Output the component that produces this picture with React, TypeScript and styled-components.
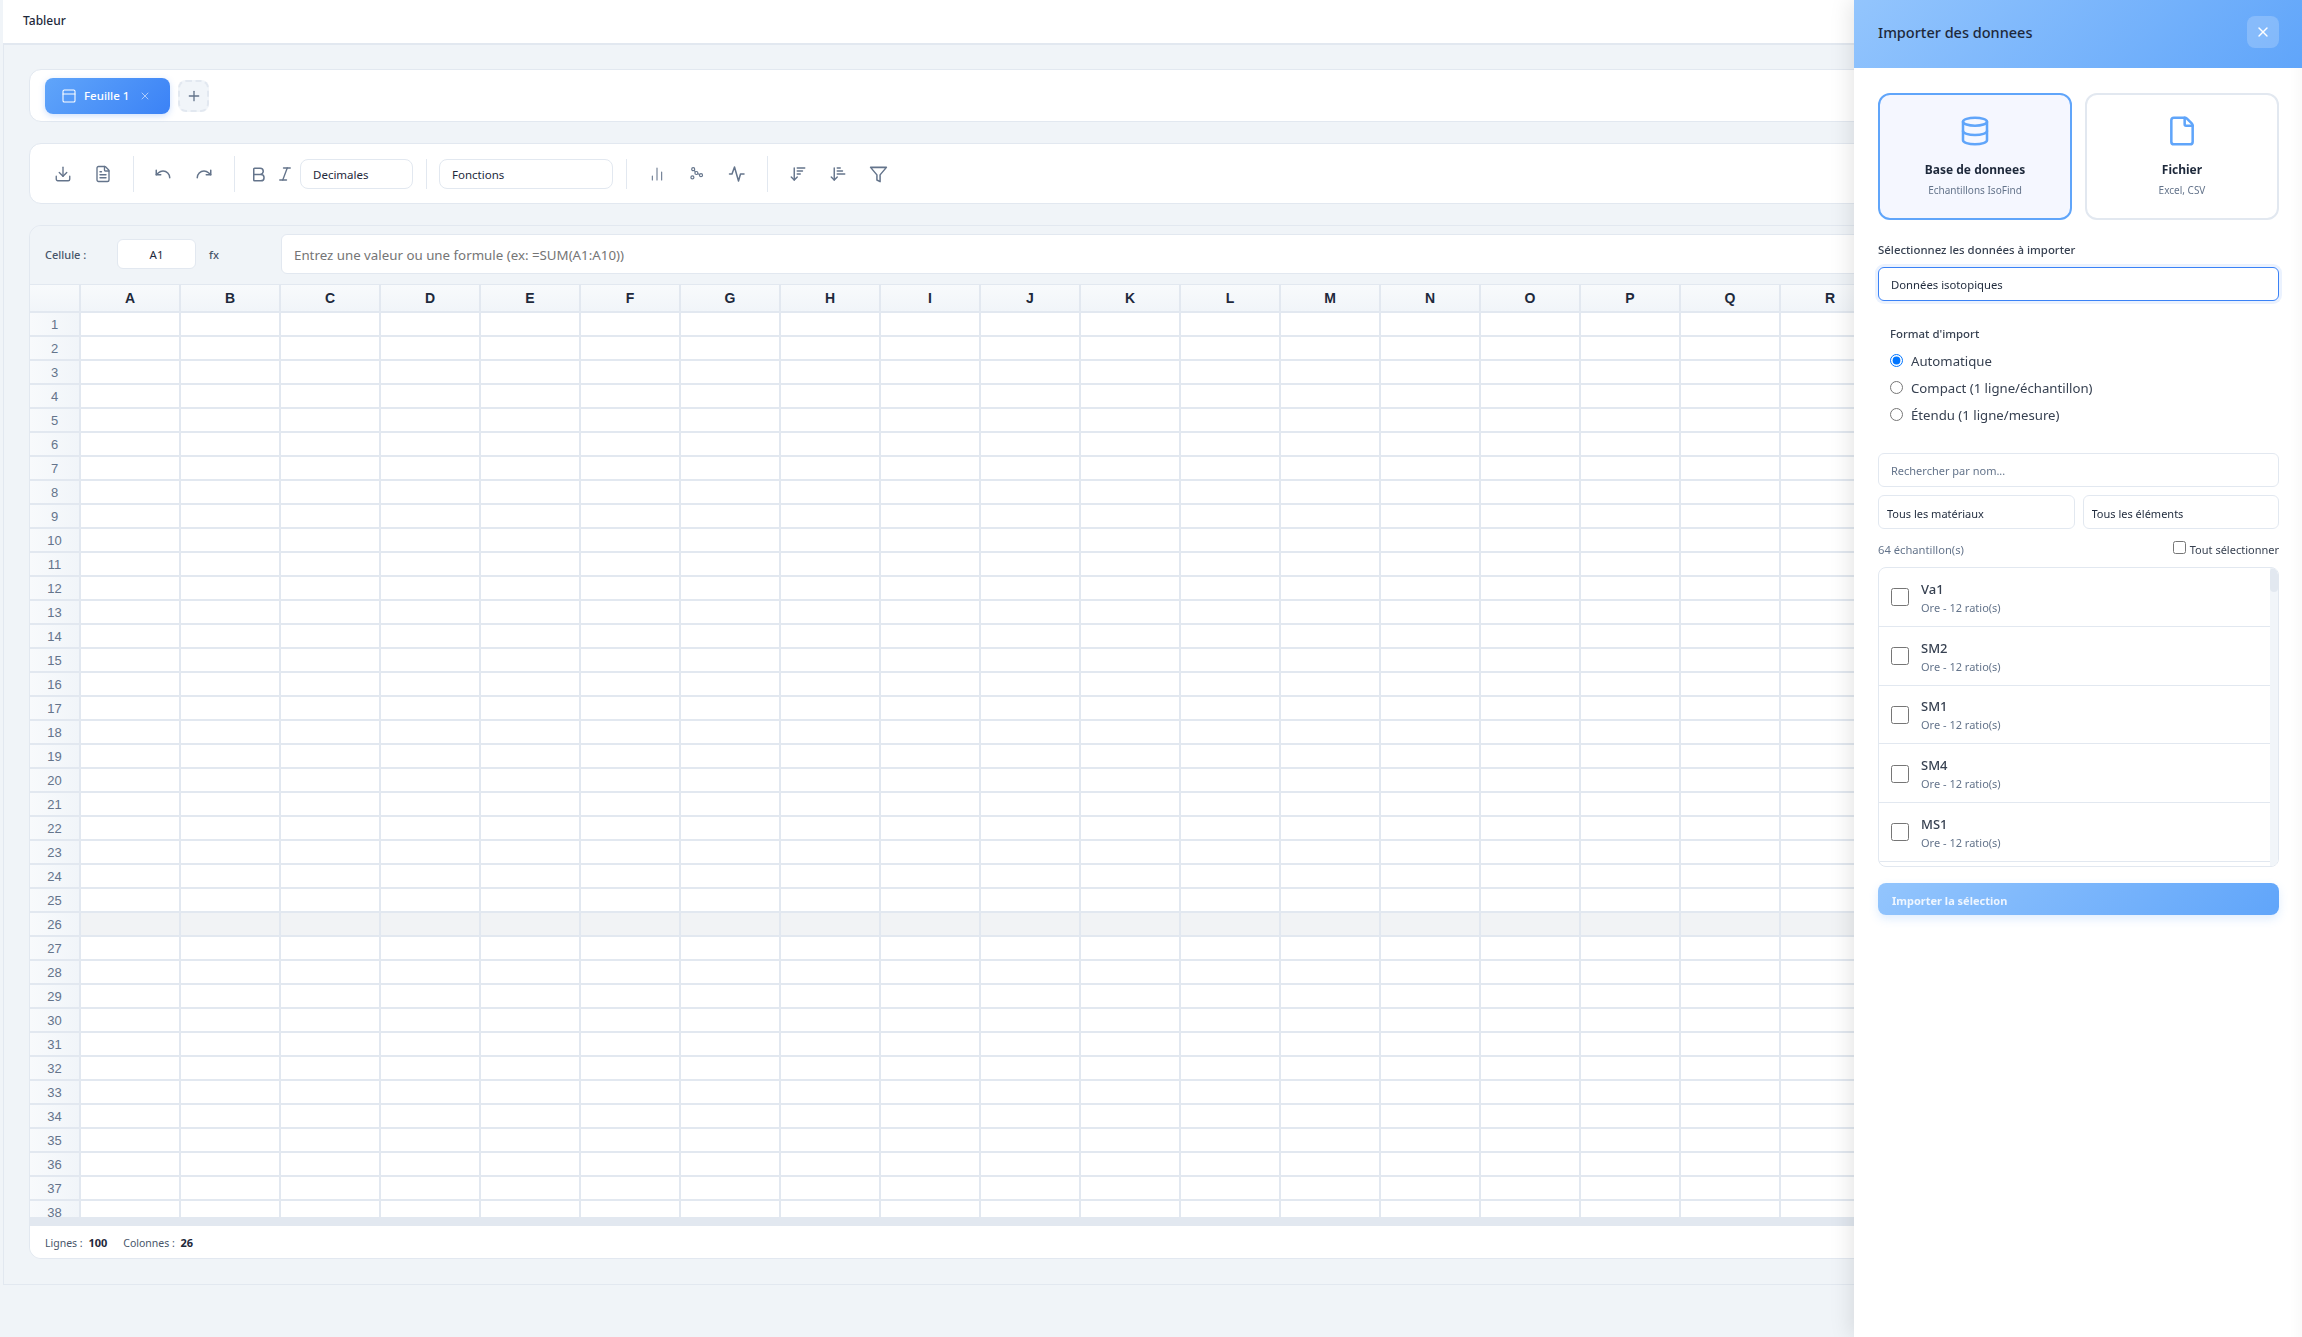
import React from 'react';
import styled, { createGlobalStyle } from 'styled-components';
import {
  ArrowDownNarrowWide,
  ArrowDownWideNarrow,
  Bold,
  ChartNoAxesColumn,
  Database,
  Download,
  File,
  FileText,
  Italic,
  PanelTop,
  Plus,
  Redo,
  Undo,
  X,
} from 'lucide-react';

const COLUMNS = 'ABCDEFGHIJKLMNOPQR'.split('');
const ROW_COUNT = 38;
const HIGHLIGHTED_ROW = 26;
const SAMPLES = ['Va1', 'SM2', 'SM1', 'SM4', 'MS1'];
const FORMATS = ['Automatique', 'Compact (1 ligne/échantillon)', 'Étendu (1 ligne/mesure)'];

const ScatterIcon = () => (
  <svg width="14" height="14" viewBox="0 0 14 14" fill="none" stroke="currentColor" strokeWidth="1.2">
    <circle cx="3.2" cy="2.2" r="1.5" />
    <circle cx="6.4" cy="6" r="1.5" />
    <circle cx="11" cy="8.2" r="1.5" />
    <circle cx="2.4" cy="10.4" r="1.5" />
    <path d="M4.2 3.4l1.2 1.4M7.8 6.7l1.8.8" />
  </svg>
);

const ActivityIcon = () => (
  <svg width="18" height="18" viewBox="0 0 18 18" fill="none" stroke="currentColor" strokeWidth="1.5" strokeLinejoin="round" strokeLinecap="round">
    <path d="M1.5 9h2.5l2.5-7 4 14 2-7h3.5" />
  </svg>
);

const FilterIcon = () => (
  <svg width="19" height="19" viewBox="0 0 24 24" fill="none" stroke="currentColor" strokeWidth="1.9" strokeLinejoin="round" strokeLinecap="round">
    <polygon points="22 3 2 3 10 12.46 10 19 14 21 14 12.46 22 3" />
  </svg>
);

const App: React.FC = () => {
  return (
    <>
      <GlobalStyle />
      <Page>
        <TopBar>Tableur</TopBar>
        <Workspace>
          <TabsCard>
            <ActiveTab>
              <PanelTop size={16} strokeWidth={1.6} />
              <TabLabel>Feuille 1</TabLabel>
              <TabClose>
                <X size={12} strokeWidth={1.6} />
              </TabClose>
            </ActiveTab>
            <AddTab>
              <Plus size={16} strokeWidth={2} />
            </AddTab>
          </TabsCard>

          <Toolbar>
            <IconGroup>
              <ToolButton><Download size={18} strokeWidth={1.8} /></ToolButton>
              <ToolButton><FileText size={18} strokeWidth={1.8} /></ToolButton>
            </IconGroup>
            <Divider />
            <IconGroup $gap={9}>
              <ToolButton><Undo size={18} strokeWidth={2} /></ToolButton>
              <ToolButton><Redo size={18} strokeWidth={2} /></ToolButton>
            </IconGroup>
            <Divider />
            <FormatGroup>
              <FormatButton><Bold size={19} strokeWidth={1.9} /></FormatButton>
              <FormatButton><Italic size={18} strokeWidth={1.8} /></FormatButton>
            </FormatGroup>
            <ToolSelect $width={113}>Decimales</ToolSelect>
            <Divider $short />
            <ToolSelect $width={174}>Fonctions</ToolSelect>
            <Divider $short />
            <IconGroup $offset={2}>
              <ToolButton><ChartNoAxesColumn size={16} strokeWidth={1.6} /></ToolButton>
              <ToolButton><ScatterIcon /></ToolButton>
              <ToolButton><ActivityIcon /></ToolButton>
            </IconGroup>
            <Divider />
            <IconGroup $offset={1}>
              <ToolButton><ArrowDownWideNarrow size={18} strokeWidth={1.9} /></ToolButton>
              <ToolButton><ArrowDownNarrowWide size={18} strokeWidth={1.9} /></ToolButton>
              <ToolButton><FilterIcon /></ToolButton>
            </IconGroup>
          </Toolbar>

          <SheetCard>
            <FormulaBar>
              <CellLabel>Cellule :</CellLabel>
              <CellInput defaultValue="A1" />
              <FxLabel>fx</FxLabel>
              <FormulaInput placeholder="Entrez une valeur ou une formule (ex: =SUM(A1:A10))" />
            </FormulaBar>
            <GridArea>
              <HeaderRow>
                <CornerCell />
                {COLUMNS.map((col) => (
                  <ColumnHeader key={col}>{col}</ColumnHeader>
                ))}
              </HeaderRow>
              {Array.from({ length: ROW_COUNT }, (_, i) => i + 1).map((row) => (
                <Row key={row}>
                  <RowHeader>{row}</RowHeader>
                  {COLUMNS.map((col) => (
                    <Cell key={col} $highlighted={row === HIGHLIGHTED_ROW} />
                  ))}
                </Row>
              ))}
            </GridArea>
            <ScrollTrack />
            <SheetFooter>
              <span>Lignes : <strong>100</strong></span>
              <span>Colonnes : <strong>26</strong></span>
            </SheetFooter>
          </SheetCard>
        </Workspace>

        <ImportPanel>
          <PanelHeader>
            <PanelTitle>Importer des donnees</PanelTitle>
            <CloseButton><X size={16} strokeWidth={2} /></CloseButton>
          </PanelHeader>
          <PanelBody>
            <SourceRow>
              <SourceCard $active>
                <Database size={32} strokeWidth={1.9} />
                <SourceTitle>Base de donnees</SourceTitle>
                <SourceHint>Echantillons IsoFind</SourceHint>
              </SourceCard>
              <SourceCard>
                <File size={32} strokeWidth={1.9} />
                <SourceTitle>Fichier</SourceTitle>
                <SourceHint>Excel, CSV</SourceHint>
              </SourceCard>
            </SourceRow>

            <FieldLabel>Sélectionnez les données à importer</FieldLabel>
            <DataSelect>
              <option>Données isotopiques</option>
            </DataSelect>

            <FormatBlock>
              <FormatTitle>Format d'import</FormatTitle>
              {FORMATS.map((format, index) => (
                <RadioRow key={format}>
                  <input type="radio" name="format" defaultChecked={index === 0} />
                  {format}
                </RadioRow>
              ))}
            </FormatBlock>

            <SearchInput placeholder="Rechercher par nom..." />
            <FilterRow>
              <FilterSelect><option>Tous les matériaux</option></FilterSelect>
              <FilterSelect><option>Tous les éléments</option></FilterSelect>
            </FilterRow>

            <CountRow>
              <SampleCount>64 échantillon(s)</SampleCount>
              <SelectAll>
                <input type="checkbox" />
                Tout sélectionner
              </SelectAll>
            </CountRow>

            <SampleList>
              <SampleItems>
                {SAMPLES.map((sample) => (
                  <SampleItem key={sample}>
                    <SampleCheck type="checkbox" />
                    <SampleText>
                      <SampleName>{sample}</SampleName>
                      <SampleMeta>Ore - 12 ratio(s)</SampleMeta>
                    </SampleText>
                  </SampleItem>
                ))}
              </SampleItems>
              <ListScrollbar>
                <ListThumb />
              </ListScrollbar>
            </SampleList>

            <ImportButton>Importer la sélection</ImportButton>
          </PanelBody>
        </ImportPanel>
      </Page>
    </>
  );
};

export default App;

const UI_FONT = `"Noto Sans", "Open Sans", sans-serif`;

const GlobalStyle = createGlobalStyle`
  * {
    box-sizing: border-box;
  }

  body {
    margin: 0;
    background: #f0f4f8;
    font-family: ${UI_FONT};
    color: #1e293b;
  }
`;

const Page = styled.div`
  height: 1337px;
  padding-left: 3px;
  display: flex;
  flex-direction: column;
  overflow: hidden;
`;

const TopBar = styled.header`
  flex: none;
  height: 45px;
  background: #fff;
  border-bottom: 2px solid #e2e8f0;
  padding: 0 0 2px 20px;
  display: flex;
  align-items: center;
  font-size: 12px;
  font-weight: 500;
  color: #1e293b;
`;

const Workspace = styled.main`
  flex: none;
  height: 1240px;
  border: 1px solid #e2e8f0;
  border-top: none;
  padding: 24px 25px 25px;
  display: flex;
  flex-direction: column;
  gap: 21px;
`;

const TabsCard = styled.section`
  flex: none;
  height: 53px;
  background: #fff;
  border: 1px solid #e2e8f0;
  border-radius: 12px;
  padding: 0 15px;
  display: flex;
  align-items: center;
  gap: 8px;
`;

const ActiveTab = styled.div`
  width: 125px;
  height: 36px;
  border-radius: 8px;
  background: linear-gradient(135deg, #60a5fa, #3b82f6);
  box-shadow: 0 2px 6px rgba(59, 130, 246, 0.25);
  color: #fff;
  padding-left: 16px;
  display: flex;
  align-items: center;
  gap: 7px;
  font-size: 11.5px;
`;

const TabLabel = styled.span`
  font-weight: 500;
`;

const TabClose = styled.span`
  display: flex;
  margin-left: 3px;
  opacity: 0.7;
`;

const AddTab = styled.button`
  width: 31px;
  height: 32px;
  padding: 0;
  border: 2px dashed #e2e8f0;
  border-radius: 8px;
  background: #f1f5f9;
  color: #64748b;
  display: flex;
  align-items: center;
  justify-content: center;
`;

const Toolbar = styled.section`
  flex: none;
  height: 61px;
  background: #fff;
  border: 1px solid #e2e8f0;
  border-radius: 12px;
  padding: 1px 0 0 17px;
  display: flex;
  align-items: center;
`;

const IconGroup = styled.div<{ $offset?: number; $gap?: number }>`
  display: flex;
  gap: ${(p) => p.$gap ?? 8}px;
  margin-left: ${(p) => p.$offset ?? 0}px;
`;

const ToolButton = styled.button`
  width: 32px;
  height: 32px;
  padding: 0;
  border: none;
  background: none;
  color: #64748b;
  display: flex;
  align-items: center;
  justify-content: center;
`;

const FormatGroup = styled.div`
  display: flex;
  gap: 7px;
  margin-right: 5px;
`;

const FormatButton = styled(ToolButton)`
  width: 20px;
`;

const Divider = styled.div<{ $short?: boolean }>`
  flex: none;
  width: 1px;
  height: ${(p) => (p.$short ? 30 : 36)}px;
  background: #e2e8f0;
  margin: ${(p) => (p.$short ? '0 12px 0 13px' : '0 13px 0 14px')};
`;

const ToolSelect = styled.div<{ $width: number }>`
  flex: none;
  width: ${(p) => p.$width}px;
  height: 30px;
  border: 1px solid #e2e8f0;
  border-radius: 8px;
  background: #fff;
  padding-left: 12px;
  display: flex;
  align-items: center;
  font-size: 11.5px;
  color: #1e293b;
`;

const SheetCard = styled.section`
  flex: 1;
  min-height: 0;
  border: 1px solid #e2e8f0;
  border-radius: 12px;
  display: flex;
  flex-direction: column;
  overflow: hidden;
`;

const FormulaBar = styled.div`
  flex: none;
  height: 58px;
  padding: 8px 0 10px 15px;
  display: flex;
  align-items: center;
  background: #f0f4f8;
`;

const CellLabel = styled.span`
  flex: none;
  width: 72px;
  font-size: 11px;
  font-weight: 500;
  color: #475569;
`;

const CellInput = styled.input`
  flex: none;
  width: 79px;
  height: 30px;
  border: 1px solid #e2e8f0;
  border-radius: 6px;
  background: #fff;
  text-align: center;
  font: 11.5px ${UI_FONT};
  color: #1e293b;
  outline: none;
`;

const FxLabel = styled.span`
  flex: none;
  width: 85px;
  padding-left: 13px;
  font-size: 11px;
  font-weight: 500;
  color: #475569;
`;

const FormulaInput = styled.input`
  flex: 1;
  height: 40px;
  border: 1px solid #e2e8f0;
  border-radius: 6px;
  background: #fff;
  padding: 1px 12px 0;
  font: 13.3px ${UI_FONT};
  outline: none;

  &::placeholder {
    color: #757575;
  }
`;

const GridArea = styled.div`
  flex: 1;
  min-height: 0;
  overflow: hidden;
  border-top: 1px solid #e2e8f0;
  background: #fff;
`;

const HeaderRow = styled.div`
  display: flex;
  height: 28px;
`;

const Row = styled.div`
  display: flex;
  height: 24px;
`;

const ColumnHeader = styled.div`
  flex: none;
  width: 100px;
  border-right: 2px solid #e2e8f0;
  border-bottom: 2px solid #e2e8f0;
  background: linear-gradient(180deg, #f8fafc, #f1f5f9);
  display: flex;
  align-items: center;
  justify-content: center;
  font: bold 14px "Liberation Sans", Arial, sans-serif;
  color: #1e293b;
`;

const CornerCell = styled(ColumnHeader)`
  width: 51px;
`;

const RowHeader = styled.div`
  flex: none;
  width: 51px;
  border-right: 2px solid #e2e8f0;
  border-bottom: 2px solid #e2e8f0;
  background: linear-gradient(90deg, #f8fafc, #f1f5f9);
  display: flex;
  align-items: center;
  justify-content: center;
  font: 13px "Liberation Sans", Arial, sans-serif;
  color: #64748b;
`;

const Cell = styled.div<{ $highlighted?: boolean }>`
  flex: none;
  width: 100px;
  border-right: 2px solid #e2e8f0;
  border-bottom: 2px solid #e2e8f0;
  background: ${(p) => (p.$highlighted ? '#f1f3f5' : '#fff')};
`;

const ScrollTrack = styled.div`
  flex: none;
  height: 9px;
  background: #e2e8f0;
`;

const SheetFooter = styled.footer`
  flex: none;
  height: 32px;
  background: #fff;
  padding-left: 15px;
  display: flex;
  align-items: center;
  gap: 16px;
  font-size: 10.5px;
  color: #475569;

  strong {
    margin-left: 3px;
    font-size: 11px;
    font-weight: 700;
    color: #1e293b;
  }
`;

const ImportPanel = styled.aside`
  position: fixed;
  top: 0;
  right: 0;
  bottom: 0;
  width: 448px;
  background: #fff;
  box-shadow: -4px 0 20px rgba(0, 0, 0, 0.1), inset -16px 0 14px -14px rgba(0, 0, 0, 0.04);
  display: flex;
  flex-direction: column;
`;

const PanelHeader = styled.div`
  flex: none;
  height: 68px;
  background: linear-gradient(135deg, #93c5fd, #60a5fa);
  padding: 0 23px 4px 24px;
  display: flex;
  align-items: center;
  justify-content: space-between;
`;

const PanelTitle = styled.h2`
  margin: 0;
  font-size: 14.5px;
  font-weight: 500;
  color: #1e293b;
`;

const CloseButton = styled.button`
  width: 32px;
  height: 32px;
  padding: 0;
  border: none;
  border-radius: 8px;
  background: rgba(255, 255, 255, 0.2);
  color: #fff;
  display: flex;
  align-items: center;
  justify-content: center;
`;

const PanelBody = styled.div`
  padding: 25px 23px 0 24px;
  display: flex;
  flex-direction: column;
`;

const SourceRow = styled.div`
  display: flex;
  gap: 13px;
`;

const SourceCard = styled.div<{ $active?: boolean }>`
  flex: 1;
  height: 127px;
  border: 2px solid ${(p) => (p.$active ? '#60a5fa' : '#e2e8f0')};
  border-radius: 12px;
  background: ${(p) => (p.$active ? '#f5f7ff' : '#fff')};
  padding-top: 20px;
  display: flex;
  flex-direction: column;
  align-items: center;

  svg {
    color: #60a5fa;
  }
`;

const SourceTitle = styled.div`
  margin-top: 14px;
  font-size: 12px;
  font-weight: 700;
  color: #1e293b;
`;

const SourceHint = styled.div`
  margin-top: 5px;
  font-size: 10px;
  color: #64748b;
`;

const FieldLabel = styled.label`
  margin-top: 21px;
  height: 18px;
  font-size: 11.4px;
  font-weight: 500;
  line-height: 18px;
  color: #374151;
`;

const DataSelect = styled.select`
  appearance: none;
  margin-top: 8px;
  height: 34px;
  border: 1.5px solid #3b82f6;
  border-radius: 6px;
  background: #fff;
  box-shadow: 0 0 0 3px rgba(59, 130, 246, 0.1);
  padding: 1px 0 0 12px;
  font: 11.3px ${UI_FONT};
  color: #1e293b;
  outline: none;
`;

const FormatBlock = styled.fieldset`
  margin: 24px 0 0;
  padding: 0 0 0 12px;
  border: none;
  height: 128px;
`;

const FormatTitle = styled.div`
  height: 22px;
  font-size: 11.4px;
  font-weight: 500;
  line-height: 18px;
  color: #374151;
`;

const RadioRow = styled.label`
  height: 27px;
  display: flex;
  align-items: center;
  gap: 8px;
  font-size: 13.2px;
  color: #374151;

  input {
    margin: 0;
    width: 13px;
    height: 13px;
  }
`;

const SearchInput = styled.input`
  height: 34px;
  border: 1px solid #e2e8f0;
  border-radius: 6px;
  padding: 1px 12px 0;
  font: 11px ${UI_FONT};
  outline: none;

  &::placeholder {
    color: #64748b;
  }
`;

const FilterRow = styled.div`
  margin-top: 8px;
  display: flex;
  gap: 8px;
`;

const FilterSelect = styled.select`
  appearance: none;
  flex: 1;
  min-width: 0;
  height: 34px;
  border: 1px solid #e2e8f0;
  border-radius: 6px;
  background: #fff;
  padding: 2px 0 0 8px;
  font: 11px ${UI_FONT};
  color: #1e293b;
  outline: none;
`;

const CountRow = styled.div`
  height: 38px;
  padding-top: 2px;
  display: flex;
  align-items: center;
  justify-content: space-between;
  font-size: 11.2px;
`;

const SampleCount = styled.span`
  color: #64748b;
`;

const SelectAll = styled.label`
  display: flex;
  align-items: center;
  gap: 4px;
  font-size: 11px;
  color: #374151;

  input {
    margin: -4px 0 0;
    width: 13px;
    height: 13px;
  }
`;

const SampleList = styled.div`
  height: 300px;
  border: 1px solid #e2e8f0;
  border-radius: 8px;
  overflow: hidden;
  display: flex;
`;

const SampleItems = styled.div`
  flex: 1;
  min-width: 0;
`;

const SampleItem = styled.div`
  height: 58.75px;
  border-bottom: 1px solid #e2e8f0;
  padding-left: 12px;
  display: flex;
  align-items: center;
  gap: 12px;
`;

const SampleCheck = styled.input`
  margin: 1px 0 0;
  width: 18px;
  height: 18px;
`;

const SampleText = styled.div`
  padding-top: 2px;
  display: flex;
  flex-direction: column;
  gap: 2px;
`;

const SampleName = styled.div`
  font-size: 13px;
  font-weight: 500;
  line-height: 18px;
  color: #374151;
`;

const SampleMeta = styled.div`
  font-size: 11px;
  line-height: 16px;
  color: #64748b;
`;

const ListScrollbar = styled.div`
  flex: none;
  width: 8px;
  background: #f1f5f9;
`;

const ListThumb = styled.div`
  height: 24px;
  border-radius: 4px;
  background: #e2e8f0;
`;

const ImportButton = styled.button`
  margin-top: 16px;
  height: 32px;
  border: none;
  border-radius: 8px;
  background: linear-gradient(135deg, #93c5fd, #60a5fa);
  box-shadow: 0 4px 10px rgba(96, 165, 250, 0.2);
  padding: 2px 0 0 14px;
  text-align: left;
  font: 700 11px ${UI_FONT};
  color: rgba(255, 255, 255, 0.85);
`;
